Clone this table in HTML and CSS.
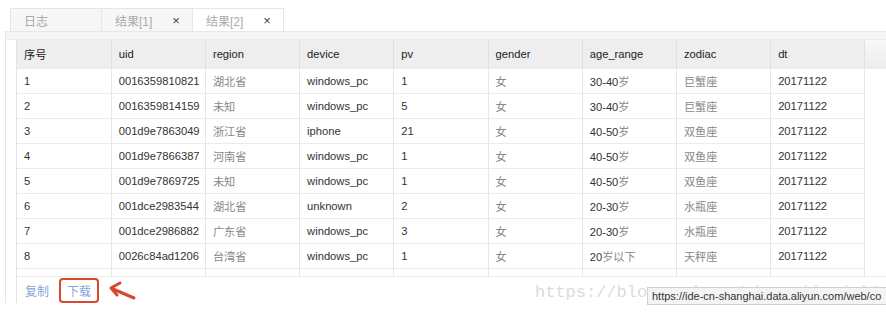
FILE: index.html
```html
<!DOCTYPE html>
<html lang="zh">
<head>
    <meta charset="UTF-8">
    <title>结果</title>
    <link rel="stylesheet" href="styles.css">
</head>
<body>
    <div class="page">
        <div class="tabs">
            <div class="tab">日志</div>
            <div class="tab">结果[1]<span class="close">×</span></div>
            <div class="tab active">结果[2]<span class="close">×</span></div>
        </div>

        <div class="panel">
            <div class="panel-bar"></div>
            <div class="grid">
                <table class="result">
                    <thead>
                        <tr>
                            <th>序号</th><th>uid</th><th>region</th><th>device</th><th>pv</th>
                            <th>gender</th><th>age_range</th><th>zodiac</th><th>dt</th><th class="gutter"></th>
                        </tr>
                    </thead>
                    <tbody>
                        <tr><td>1</td><td>0016359810821</td><td class="cn">湖北省</td><td>windows_pc</td><td>1</td><td class="cn">女</td><td>30-40<span class="cn">岁</span></td><td class="cn">巨蟹座</td><td>20171122</td><td class="gutter"></td></tr>
                        <tr><td>2</td><td>0016359814159</td><td class="cn">未知</td><td>windows_pc</td><td>5</td><td class="cn">女</td><td>30-40<span class="cn">岁</span></td><td class="cn">巨蟹座</td><td>20171122</td><td class="gutter"></td></tr>
                        <tr><td>3</td><td>001d9e7863049</td><td class="cn">浙江省</td><td>iphone</td><td>21</td><td class="cn">女</td><td>40-50<span class="cn">岁</span></td><td class="cn">双鱼座</td><td>20171122</td><td class="gutter"></td></tr>
                        <tr><td>4</td><td>001d9e7866387</td><td class="cn">河南省</td><td>windows_pc</td><td>1</td><td class="cn">女</td><td>40-50<span class="cn">岁</span></td><td class="cn">双鱼座</td><td>20171122</td><td class="gutter"></td></tr>
                        <tr><td>5</td><td>001d9e7869725</td><td class="cn">未知</td><td>windows_pc</td><td>1</td><td class="cn">女</td><td>40-50<span class="cn">岁</span></td><td class="cn">双鱼座</td><td>20171122</td><td class="gutter"></td></tr>
                        <tr><td>6</td><td>001dce2983544</td><td class="cn">湖北省</td><td>unknown</td><td>2</td><td class="cn">女</td><td>20-30<span class="cn">岁</span></td><td class="cn">水瓶座</td><td>20171122</td><td class="gutter"></td></tr>
                        <tr><td>7</td><td>001dce2986882</td><td class="cn">广东省</td><td>windows_pc</td><td>3</td><td class="cn">女</td><td>20-30<span class="cn">岁</span></td><td class="cn">水瓶座</td><td>20171122</td><td class="gutter"></td></tr>
                        <tr><td>8</td><td>0026c84ad1206</td><td class="cn">台湾省</td><td>windows_pc</td><td>1</td><td class="cn">女</td><td>20<span class="cn">岁以下</span></td><td class="cn">天秤座</td><td>20171122</td><td class="gutter"></td></tr>
                        <tr><td>9</td><td>0026c84ad1544</td><td class="cn">福建省</td><td>windows_pc</td><td>109</td><td class="cn">女</td><td>20<span class="cn">岁以下</span></td><td class="cn">天秤座</td><td>20171122</td><td class="gutter"></td></tr>
                    </tbody>
                </table>
            </div>
            <div class="footer">
                <a class="action">复制</a>
                <a class="action marked">下载</a>
                <svg class="arrow" width="30" height="22" viewBox="0 0 30 22">
                    <path d="M27 18 L6 9" stroke="#d9472f" stroke-width="3" stroke-linecap="round" fill="none"/>
                    <path d="M13 3 L4 8 L10 15" stroke="#d9472f" stroke-width="3" stroke-linecap="round" stroke-linejoin="round" fill="none"/>
                </svg>
            </div>
        </div>

        <div class="watermark">https://blog.csdn.net/yunqiinsight</div>
        <div class="status">https://ide-cn-shanghai.data.aliyun.com/web/co</div>
    </div>
</body>
</html>
```

FILE: styles.css
```css
* {
    margin: 0;
    padding: 0;
    box-sizing: border-box;
}

body {
    font-family: "Liberation Sans", Arial, "Noto Sans CJK SC", sans-serif;
    font-size: 11.2px;
    color: #333;
    background: #fff;
}

.page {
    position: relative;
    width: 886px;
    height: 313px;
    overflow: hidden;
}

/* tabs */
.tabs {
    display: flex;
    padding: 8px 0 0 10px;
    height: 31px;
}

.tab {
    width: 92px;
    height: 23px;
    display: flex;
    align-items: center;
    padding-left: 13px;
    font-size: 12px;
    color: #aaa;
    background: #f7f7f7;
    border: 1px solid #e6e6e6;
    border-bottom: none;
    margin-right: -1px;
}

.tab.active {
    background: #fff;
}

.close {
    margin-left: 20px;
    color: #444;
    font-size: 13px;
}

/* panel */
.panel {
    margin-left: 5px;
    border-left: 1px solid #e6e6e6;
    padding-left: 10px;
}

.panel-bar {
    height: 9px;
    margin-left: -10px;
    background: #f6f6f6;
    border-top: 1px solid #e8e8e8;
    border-bottom: 1px solid #ececec;
}

.grid {
    height: 236px;
    overflow: hidden;
    border-left: 1px solid #e3e3e3;
}

.result {
    border-collapse: collapse;
    table-layout: fixed;
    width: 870px;
}

.result th,
.result td {
    width: 94px;
    text-align: left;
    font-weight: normal;
    padding: 0 0 0 7px;
    border-right: 1px solid #e6e6e6;
    border-bottom: 1px solid #ececec;
    white-space: nowrap;
    overflow: hidden;
}

.result th {
    height: 28px;
    background: #eeeeee;
    color: #222;
    border-right-color: #e0e0e0;
}

.result td {
    height: 25px;
}

.result .gutter {
    width: 22px;
    border-right: none;
}

.result th.gutter {
    background: linear-gradient(#f8f8f8, #ececec);
}

.result td.gutter {
    border-bottom: none;
}

.cn {
    color: #888;
}

/* footer */
.footer {
    display: flex;
    align-items: center;
    gap: 17px;
    height: 27px;
    padding-left: 8px;
    border-left: 1px solid #e3e3e3;
    border-top: 1px solid #ececec;
}

.action {
    color: #87a6d8;
    font-size: 12px;
    cursor: pointer;
}

.action.marked {
    padding: 2px 6px;
    margin-left: -7px;
    border: 2px solid #d9472f;
    border-radius: 4px;
}

.arrow {
    margin-left: -9px;
    margin-top: 2px;
}

/* overlays */
.watermark {
    position: absolute;
    left: 535px;
    top: 283px;
    font-family: "Liberation Mono", "Courier New", monospace;
    font-size: 17px;
    color: #dcdcdc;
    white-space: nowrap;
}

.status {
    position: absolute;
    left: 647px;
    top: 287px;
    width: 250px;
    height: 18px;
    padding: 2px 0 0 4px;
    font-size: 11px;
    color: #333;
    background: #f4f4f4;
    border: 1px solid #cfcfcf;
    white-space: nowrap;
    overflow: hidden;
}
```
